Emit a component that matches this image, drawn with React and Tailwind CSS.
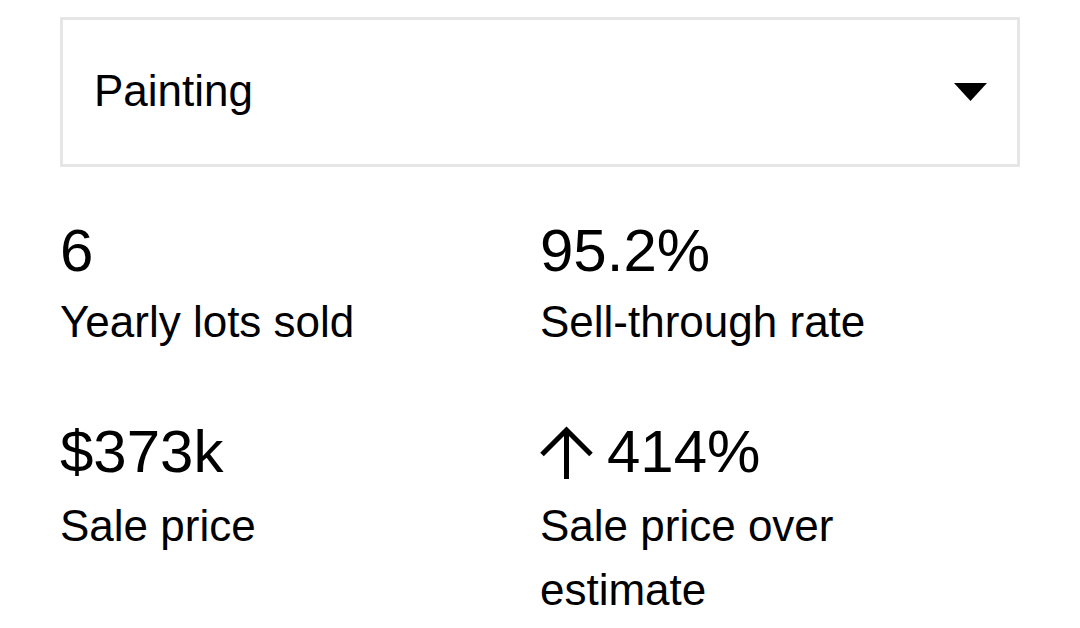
const STATS = [
  { value: '6', label: 'Yearly lots sold' },
  { value: '95.2%', label: 'Sell-through rate' },
  { value: '$373k', label: 'Sale price' },
  { value: '414%', label: 'Sale price over estimate', up: true },
];

function ArrowUp() {
  return (
    <svg width="53" height="53" viewBox="0 0 53 53" fill="none" stroke="#000" strokeWidth="5">
      <path d="M26.5 53V4" />
      <path d="M2 28.5L26.5 4L51 28.5" />
    </svg>
  );
}

export default function App() {
  return (
    <div
      className="min-h-screen bg-white text-black px-[60px] pt-[17px]"
      style={{ fontFamily: '"Liberation Sans", Arial, sans-serif' }}
    >
      <div className="h-[150px] border-[3px] border-[#e6e6e6] flex items-center justify-between pl-[31px] pr-[30px]">
        <span className="text-[44px] -mt-[2px]">Painting</span>
        <svg width="33" height="18" viewBox="0 0 33 18">
          <path d="M0 0H33L16.5 18Z" fill="#000" />
        </svg>
      </div>

      <div className="grid grid-cols-2 mt-[49px] gap-y-[60px]">
        {STATS.map((s, i) => (
          <div key={s.label} className="pr-[40px]">
            <div
              className={`flex items-center gap-[14px] text-[60px] ${
                i < 2 ? 'leading-[70px]' : 'leading-[76px]'
              }`}
            >
              {s.up && <ArrowUp />}
              <span>{s.value}</span>
            </div>
            <div className="text-[44px] leading-[64px] mt-[4px]">{s.label}</div>
          </div>
        ))}
      </div>
    </div>
  );
}
